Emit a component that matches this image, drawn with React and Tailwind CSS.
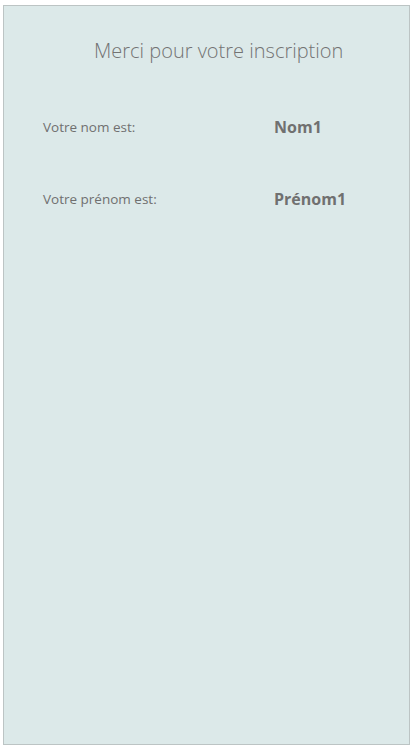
export default function App() {
  const rows = [
    { label: "Votre nom est:", value: "Nom1" },
    { label: "Votre prénom est:", value: "Prénom1" },
  ];

  return (
    <div className="h-[748px] w-[412px] bg-white pl-[3px] pt-[5px] font-['Open_Sans',sans-serif]">
      <div className="flex h-[740px] w-[407px] flex-col border border-[#bcc4c4] bg-[#dce9e9]">
        <h1 className="mt-[30px] pl-[90px] text-[20px] font-light leading-[30px] text-[#737373]">
          Merci pour votre inscription
        </h1>
        <div className="mt-[51px] flex flex-col gap-[52px] pl-[39px]">
          {rows.map(({ label, value }) => (
            <div key={label} className="flex h-[20px] items-center">
              <span className="w-[231px] text-[13.5px] font-normal text-[#707070]">{label}</span>
              <span className="text-[16px] font-bold text-[#707070]">{value}</span>
            </div>
          ))}
        </div>
      </div>
    </div>
  );
}
